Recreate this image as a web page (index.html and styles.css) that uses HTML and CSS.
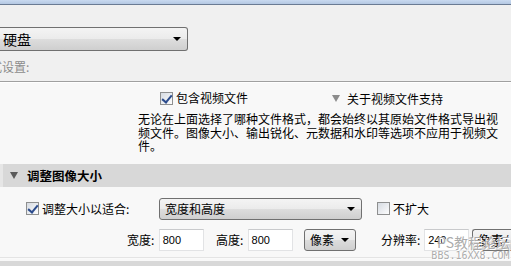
FILE: index.html
```html
<!DOCTYPE html>
<html lang="zh">
<head>
<meta charset="utf-8">
<link rel="stylesheet" href="styles.css">
</head>
<body>
<div class="titlebar"></div>
<div class="top">
  <div class="select big">
    <span class="sel-text">硬盘</span>
    <span class="arrow"></span>
  </div>
  <div class="muted"><span class="cut">式</span>设置:</div>
</div>
<div class="content">
  <div class="video-row">
    <label class="check-item video-check"><span class="cb checked"></span>包含视频文件</label>
    <span class="about"><span class="tri gray"></span>关于视频文件支持</span>
  </div>
  <p class="note">无论在上面选择了哪种文件格式，都会始终以其原始文件格式导出视频文件。图像大小、输出锐化、元数据和水印等选项不应用于视频文件。</p>
  <div class="section-head"><span class="tri dark"></span>调整图像大小</div>
  <div class="row row1">
    <label class="check-item fit"><span class="cb checked"></span>调整大小以适合:</label>
    <div class="select wide"><span class="sel-text">宽度和高度</span><span class="arrow"></span></div>
    <label class="check-item noexpand"><span class="cb"></span>不扩大</label>
  </div>
  <div class="row row2">
    <span class="lbl w-lbl">宽度:</span>
    <span class="input">800</span>
    <span class="lbl h-lbl">高度:</span>
    <span class="input">800</span>
    <div class="select unit"><span class="sel-text">像素</span><span class="arrow"></span></div>
    <span class="lbl r-lbl">分辨率:</span>
    <span class="input res">240</span>
    <div class="select unit2"><span class="sel-text">像素/</span></div>
  </div>
  <div class="bottom-line"></div>
  <div class="bottom-bar"></div>
  <div class="watermark"><span class="wm1">PS教程论坛</span><span class="wm2">BBS.16XX8.COM</span></div>
</div>
</body>
</html>
```
FILE: styles.css
```css
* { box-sizing: border-box; }
html, body { margin: 0; padding: 0; }
body {
  width: 511px;
  height: 266px;
  overflow: hidden;
  background: #f8f8f8;
  font-family: "Noto Sans CJK SC", "Noto Sans", sans-serif;
  font-size: 12px;
  color: #000;
  position: relative;
}
.titlebar {
  height: 5px;
  background: linear-gradient(#c9daf0, #b4c8e2);
  border-bottom: 1px solid #6a7b93;
}
.top {
  height: 77px;
  background: #f0f0f0;
  border-bottom: 1px solid #a0a0a0;
  padding-top: 22px;
}
.select {
  position: relative;
  height: 24px;
  border: 1px solid #707070;
  border-radius: 3px;
  background: linear-gradient(#f4f4f4 0%, #ebebeb 50%, #dddddd 51%, #cfcfcf 100%);
  display: flex;
  align-items: center;
  padding-left: 3px;
}
.select.big {
  width: 188px;
  border-left: none;
  border-radius: 0 3px 3px 0;
  font-size: 14px;
  padding-left: 3px;
}
.sel-text { line-height: 1; }
.arrow {
  position: absolute;
  right: 6px;
  top: 50%;
  margin-top: -2px;
  width: 0; height: 0;
  border-left: 4px solid transparent;
  border-right: 4px solid transparent;
  border-top: 4px solid #000;
}
.muted {
  margin-top: 9px;
  margin-left: -10px;
  color: #8c8c8c;
  font-size: 12px;
  line-height: 14px;
}
.content {
  border-top: 1px solid #ffffff;
}
.video-row {
  display: flex;
  align-items: center;
  height: 14px;
  margin-top: 8px;
}
.check-item {
  display: flex;
  align-items: center;
  line-height: 14px;
}
.video-check { margin-left: 160px; }
.cb {
  width: 13px;
  height: 13px;
  border: 1px solid #8e8f8f;
  background: linear-gradient(135deg, #d6dbe2, #fdfdfd);
  margin-right: 3px;
  position: relative;
  flex: none;
}
.cb.checked::after {
  content: "";
  position: absolute;
  left: 3px;
  top: 0px;
  width: 4px;
  height: 8px;
  border-right: 2px solid #2b4b8c;
  border-bottom: 2px solid #2b4b8c;
  transform: rotate(40deg);
}
.about {
  margin-left: 84px;
  display: flex;
  align-items: center;
}
.tri {
  width: 0; height: 0;
  border-left: 4px solid transparent;
  border-right: 4px solid transparent;
  border-top: 7px solid #7a7a7a;
  margin-right: 7px;
}
.tri.gray { border-top-color: #8c8c8c; margin-left: 0; }
.tri.dark { border-top-color: #5a5a5a; margin-left: 10px; margin-right: 9px; }
.note {
  margin: 7px 0 0 138px;
  width: 362px;
  line-height: 13.5px;
  font-size: 12px;
}
.section-head {
  margin-top: 11px;
  height: 23px;
  background: #d8d8d8;
  border-left: 3px solid #e6e6e6;
  display: flex;
  align-items: center;
  font-weight: bold;
  font-size: 12.5px;
}
.section-head .tri { margin-left: 7px; }
.row {
  display: flex;
  align-items: center;
}
.row1 { margin-top: 11px; height: 22px; }
.fit { margin-left: 26px; width: 133px; }
.select.wide { width: 203px; height: 22px; padding-left: 5px; }
.noexpand { margin-left: 15px; }
.row2 { margin-top: 9px; height: 22px; }
.lbl { line-height: 14px; }
.w-lbl { margin-left: 127px; width: 33px; }
.h-lbl { margin-left: 12px; width: 33px; }
.r-lbl { margin-left: 25px; width: 45px; }
.input {
  width: 47px;
  height: 22px;
  background: #fff;
  border: 1px solid #e2e3e5;
  border-top-color: #c9cacc;
  font-family: "Liberation Sans", Arial, sans-serif;
  font-size: 11px;
  line-height: 20px;
  padding-left: 3px;
}
.select.unit { width: 54px; height: 22px; margin-left: 11px; padding-left: 5px; }
.input.res { width: 47px; }
.select.unit2 { width: 40px; height: 22px; margin-left: 3px; border-right: none; border-radius: 3px 0 0 3px; padding-left: 4px; font-size: 13px; }
.bottom-line {
  margin-top: 6px;
  height: 2px;
  border-top: 1px solid #e4e4e4;
  background: #fafafa;
}
.bottom-bar {
  margin-top: 2px;
  height: 6px;
  background: #d8d8d8;
}
.watermark {
  position: absolute;
  left: 430px;
  top: 234px;
  width: 81px;
  display: flex;
  flex-direction: column;
  align-items: center;
  color: rgba(150,150,150,0.8);
  text-shadow: 0 0 1px #fff, 1px 1px 0 #fff;
  pointer-events: none;
}
.wm1 { font-size: 14px; line-height: 16px; margin-left: 6px; }
.wm2 { font-family: "DejaVu Sans Mono", monospace; font-size: 10px; line-height: 11px; letter-spacing: 0px; }
```
